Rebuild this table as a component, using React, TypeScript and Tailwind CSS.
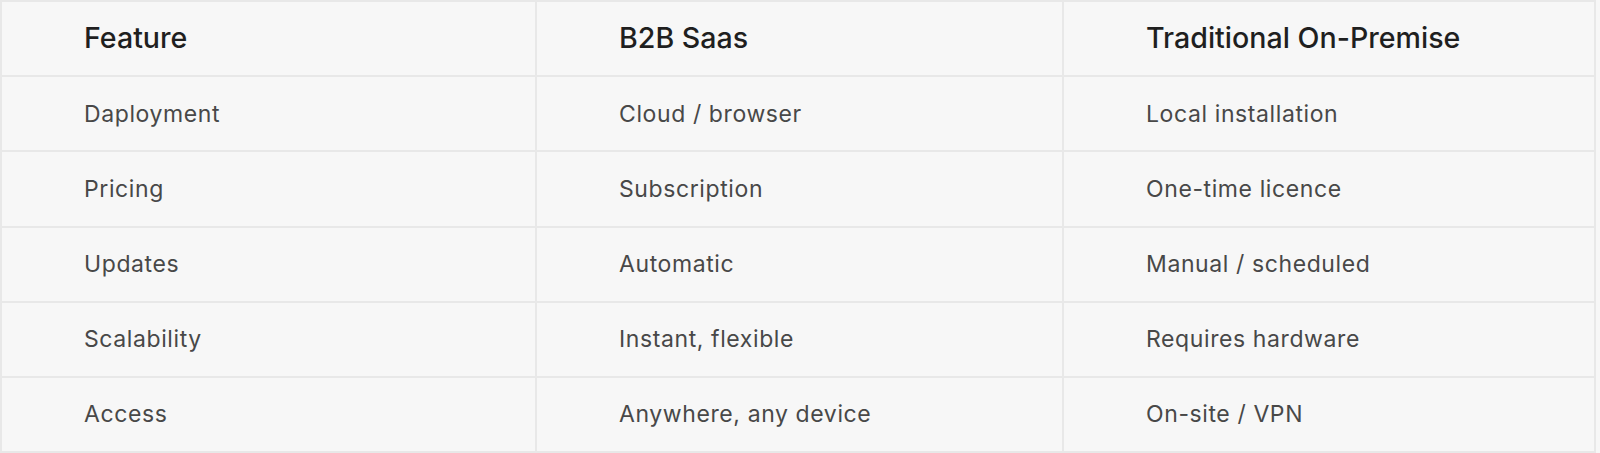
const rows = [
  ["Daployment", "Cloud / browser", "Local installation"],
  ["Pricing", "Subscription", "One-time licence"],
  ["Updates", "Automatic", "Manual / scheduled"],
  ["Scalability", "Instant, flexible", "Requires hardware"],
  ["Access", "Anywhere, any device", "On-site / VPN"],
];

const headers = ["Feature", "B2B Saas", "Traditional On-Premise"];

export default function App() {
  return (
    <div className="min-h-[453px] w-full bg-[#f7f7f7] font-['Inter',sans-serif]">
      <div className="w-[1596px] border-2 border-[#e8e8e8] grid grid-cols-[535px_527px_1fr]">
        {headers.map((h, i) => (
          <div
            key={h}
            className={`h-[75.2px] flex items-center pl-[82px] text-[28.6px] font-medium text-[#1f1f1f] border-b-2 border-[#e8e8e8] ${
              i < 2 ? "border-r-2" : ""
            }`}
          >
            {h}
          </div>
        ))}
        {rows.map((row, r) =>
          row.map((cell, i) => (
            <div
              key={`${r}-${i}`}
              className={`flex items-center pl-[82px] text-[23px] tracking-[0.6px] text-[#484848] border-[#e8e8e8] ${
                r < rows.length - 1 ? "h-[75.2px] border-b-2" : "h-[73.2px]"
              } ${i < 2 ? "border-r-2" : ""}`}
            >
              {cell}
            </div>
          ))
        )}
      </div>
    </div>
  );
}
